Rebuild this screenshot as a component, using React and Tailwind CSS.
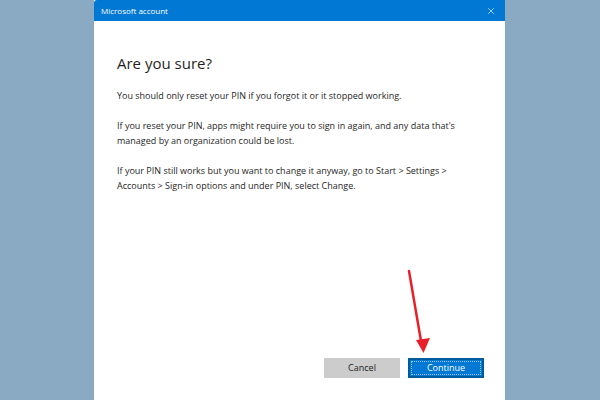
import { X } from "lucide-react";

const paragraphs = [
  "You should only reset your PIN if you forgot it or it stopped working.",
  "If you reset your PIN, apps might require you to sign in again, and any data that's managed by an organization could be lost.",
  "If your PIN still works but you want to change it anyway, go to Start > Settings > Accounts > Sign-in options and under PIN, select Change.",
];

const App = () => {
  return (
    <div
      className="relative w-[600px] h-[400px] overflow-hidden bg-[#8aa9c3] pl-[94px]"
      style={{ fontFamily: '"Open Sans", "Noto Sans", sans-serif' }}
    >
      {/* dialog window */}
      <div className="w-[411px] h-[400px] bg-white flex flex-col">
        <div className="h-[21px] bg-[#0078d4] flex items-center justify-between pl-[7px] pr-[9px] rounded-tl-[3px]">
          <span className="text-[8px] text-white">Microsoft account</span>
          <X size={10} strokeWidth={1.8} className="text-[#d6eafa]" />
        </div>

        <div className="flex-1 flex flex-col pl-[23px] pr-[21px] pt-[32px] pb-[22px]">
          <h1 className="text-[15px] leading-[20px] text-[#1f1f1f] font-normal">Are you sure?</h1>
          <div className="mt-[15px] flex flex-col gap-[15px] text-[9px] leading-[15px] text-[#262626]">
            {paragraphs.map((p, i) => (
              <p key={i}>{p}</p>
            ))}
          </div>

          <div className="mt-auto flex justify-end gap-[8px]">
            <button className="w-[76px] h-[20px] bg-[#cccccc] text-[9px] text-[#222]">
              Cancel
            </button>
            <button className="w-[76px] h-[20px] bg-[#0078d4] border-2 border-[#005a9e] p-px text-[9px] text-white">
              <span className="flex items-center justify-center w-full h-full border border-dotted border-[#9cc8ef]">
                Continue
              </span>
            </button>
          </div>
        </div>
      </div>

      {/* red arrow annotation */}
      <svg className="absolute inset-0 pointer-events-none" width="600" height="400" viewBox="0 0 600 400">
        <line x1="409" y1="271" x2="421" y2="341" stroke="#e8202a" strokeWidth="2.5" strokeLinecap="round" />
        <polygon points="416,340 430,338 423.5,353" fill="#e8202a" />
      </svg>
    </div>
  );
};

export default App;
